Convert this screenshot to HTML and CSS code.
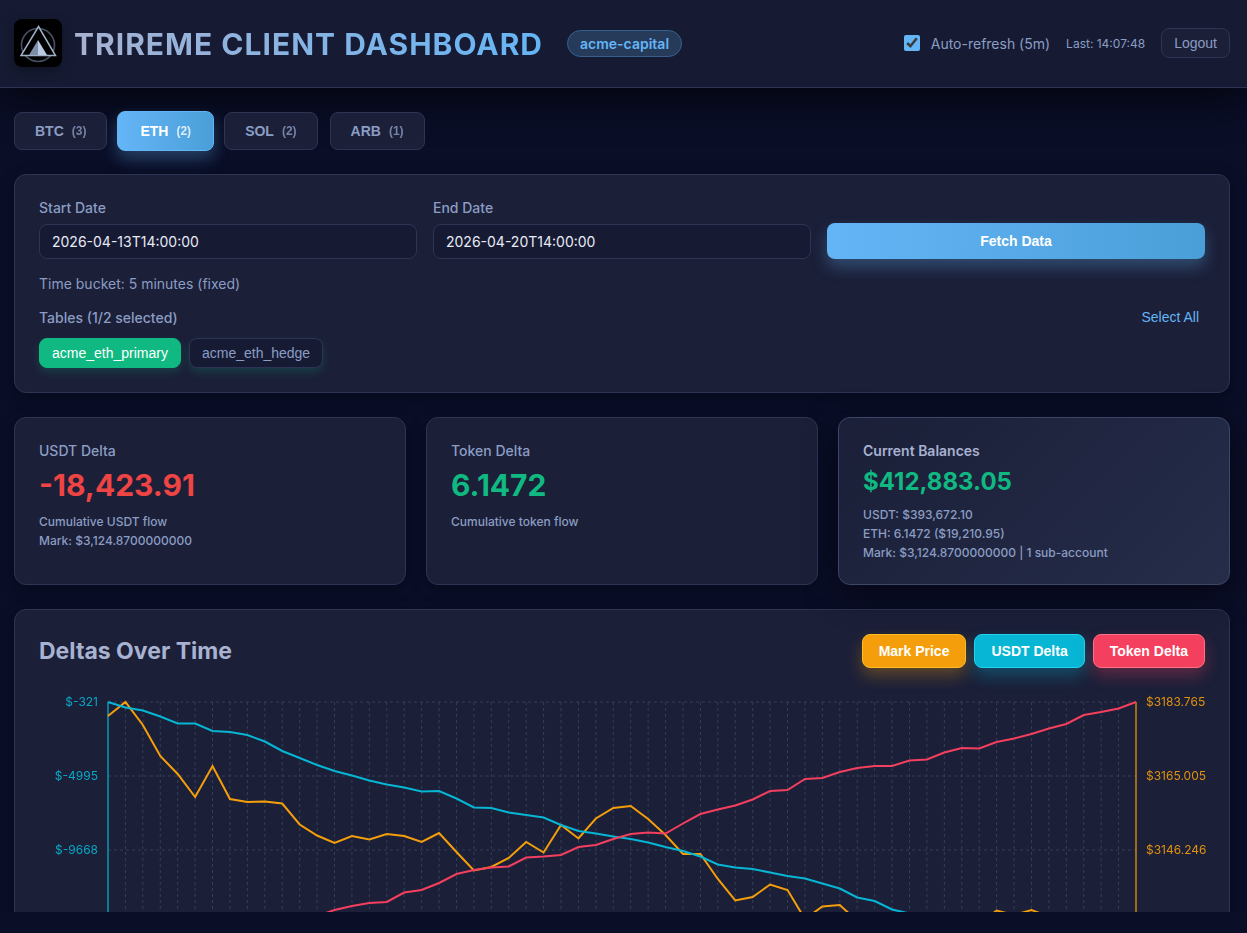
FILE: index.html
```html
<!DOCTYPE html>
<html lang="en">
<head>
    <meta charset="UTF-8">
    <meta name="viewport" content="width=device-width, initial-scale=1">
    <title>Trireme Client Dashboard</title>
    <link rel="stylesheet" href="styles.css">
</head>
<body>
    <header class="header">
        <div class="brand">
            <svg class="logo" viewBox="0 0 48 48" aria-hidden="true">
                <rect width="48" height="48" fill="#000"/>
                <circle cx="24" cy="26" r="16.5" fill="none" stroke="#465062" stroke-width="1.6"/>
                <path d="M24.500 7.500L41.500 36.500H7z" fill="#000" stroke="#9fb0c4" stroke-width="1.5"/>
                <path d="M24 21L15 36h9z" fill="#7d8ea6"/>
                <path d="M24 21L33 36h-9z" fill="#b9cbe2"/>
            </svg>
            <h1 class="title">TRIREME CLIENT DASHBOARD</h1>
            <span class="badge">acme-capital</span>
        </div>
        <div class="tools">
            <label class="auto"><input type="checkbox" checked> Auto-refresh (5m)</label>
            <span class="last">Last: 14:07:48</span>
            <button class="logout" type="button">Logout</button>
        </div>
    </header>

    <main class="main">
        <nav class="tabs">
            <button class="tab" type="button">BTC <span class="count">(3)</span></button>
            <button class="tab active" type="button">ETH <span class="count">(2)</span></button>
            <button class="tab" type="button">SOL <span class="count">(2)</span></button>
            <button class="tab" type="button">ARB <span class="count">(1)</span></button>
        </nav>

        <section class="panel">
            <form class="filters">
                <div class="field">
                    <label for="start">Start Date</label>
                    <input id="start" type="text" value="2026-04-13T14:00:00">
                </div>
                <div class="field">
                    <label for="end">End Date</label>
                    <input id="end" type="text" value="2026-04-20T14:00:00">
                </div>
                <button class="fetch" type="button">Fetch Data</button>
            </form>
            <p class="bucket">Time bucket: 5 minutes (fixed)</p>
            <div class="tables_head">
                <span>Tables (1/2 selected)</span>
                <button class="select_all" type="button">Select All</button>
            </div>
            <div class="chips">
                <button class="chip active" type="button">acme_eth_primary</button>
                <button class="chip" type="button">acme_eth_hedge</button>
            </div>
        </section>

        <section class="cards">
            <div class="panel">
                <h3 class="card_label">USDT Delta</h3>
                <div class="value down">-18,423.91</div>
                <div class="notes">
                    <span>Cumulative USDT flow</span>
                    <span>Mark: $3,124.8700000000</span>
                </div>
            </div>
            <div class="panel">
                <h3 class="card_label">Token Delta</h3>
                <div class="value up">6.1472</div>
                <div class="notes">
                    <span>Cumulative token flow</span>
                </div>
            </div>
            <div class="panel balances">
                <h3 class="card_label">Current Balances</h3>
                <div class="value up">$412,883.05</div>
                <div class="notes">
                    <span>USDT: $393,672.10</span>
                    <span>ETH: 6.1472 ($19,210.95)</span>
                    <span>Mark: $3,124.8700000000 | 1 sub-account</span>
                </div>
            </div>
        </section>

        <section class="panel">
            <div class="chart_head">
                <h2>Deltas Over Time</h2>
                <div class="toggles">
                    <button class="toggle mark" type="button">Mark Price</button>
                    <button class="toggle usdt" type="button">USDT Delta</button>
                    <button class="toggle token" type="button">Token Delta</button>
                </div>
            </div>
            <svg class="chart" viewBox="0 0 1166 400" role="img" aria-label="Deltas over time"></svg>
        </section>
    </main>
    <script src="chart.js"></script>
</body>
</html>
```

FILE: styles.css
```css
* {
    box-sizing: border-box;
}

body,
h1,
h2,
h3,
p {
    margin: 0;
}

body {
    display: flex;
    flex-direction: column;
    height: 100vh;
    padding-bottom: 21px;
    background: #0a0e27;
    color: #8b9dc3;
    font: 14px/17px Inter, "Noto Sans", sans-serif;
}

button {
    font: 14px/16px "Liberation Sans", Arial, sans-serif;
    border-radius: 8px;
    cursor: pointer;
}

/* header */

.header {
    display: flex;
    align-items: center;
    justify-content: space-between;
    padding: 19px 17px 20px 14px;
    background: #161b33;
    border-bottom: 1px solid #2d3454;
    box-shadow: 0 10px 40px rgba(0, 0, 0, 0.7);
    position: relative;
}

.brand,
.tools,
.auto {
    display: flex;
    align-items: center;
}

.logo {
    width: 48px;
    height: 48px;
    border-radius: 8px;
    box-shadow: 0 4px 12px rgba(0, 0, 0, 0.3);
}

.title {
    margin: 0 24px 0 12px;
    padding-top: 2px;
    font-size: 30px;
    line-height: 36px;
    font-weight: 700;
    letter-spacing: 1px;
    background: linear-gradient(90deg, #a8b2d1, #64b5f6);
    -webkit-background-clip: text;
    background-clip: text;
    color: transparent;
}

.badge {
    padding: 4px 12px;
    border: 1px solid #36618d;
    border-radius: 14px;
    background: #263a5a;
    color: #64b5f6;
    font-weight: 600;
}

.tools {
    gap: 16px;
}

.auto {
    gap: 11px;
}

.auto input {
    width: 16px;
    height: 16px;
    margin: 0;
    accent-color: #64b5f6;
}

.last {
    font-size: 12px;
}

.logout {
    padding: 6px 12px;
    border: 1px solid #2d3454;
    background: #1b1f38;
    color: #8b9dc3;
}

/* content */

.main {
    flex: 1;
    min-height: 0;
    overflow: hidden;
    display: flex;
    flex-direction: column;
    gap: 24px;
    padding: 24px 17px 0 14px;
}

/* keeps the tabs above the shadow of the header */
.tabs {
    display: flex;
    align-items: center;
    gap: 12px;
    height: 38px;
    position: relative;
    z-index: 1;
}

.tab {
    display: flex;
    align-items: center;
    gap: 8px;
    padding: 10px 20px;
    border: 1px solid #2d3454;
    background: #1b1f38;
    color: #8b9dc3;
    font-weight: 700;
}

.count {
    font-size: 12px;
    opacity: 0.8;
}

.tab.active {
    margin: 0 -2px;
    padding: 11px 22px;
    border-color: #64b5f6;
    background: linear-gradient(90deg, #64b5f6, #4a9fd8);
    color: #fff;
    box-shadow: 0 8px 16px rgba(100, 181, 246, 0.3);
}

.panel {
    flex-shrink: 0;
    padding: 24px;
    border: 1px solid #2d3454;
    border-radius: 12px;
    background: #1b1f38;
    box-shadow: 0 4px 16px rgba(0, 0, 0, 0.3);
}

.filters {
    display: grid;
    grid-template-columns: repeat(3, 1fr);
    align-items: end;
    gap: 16px;
}

.field label {
    display: block;
    margin-bottom: 8px;
    font-weight: 500;
}

.field input {
    display: block;
    width: 100%;
    padding: 8px 12px;
    border: 1px solid #2d3454;
    border-radius: 8px;
    background: #161b33;
    color: #e8eaf6;
    font: 14px/17px Inter, sans-serif;
}

.fetch {
    padding: 10px 16px;
    border: 0;
    background: linear-gradient(90deg, #64b5f6, #4a9fd8);
    color: #fff;
    font-weight: 700;
    box-shadow: 0 8px 16px rgba(100, 181, 246, 0.3);
}

.bucket {
    margin: 16px 0 15px;
}

.tables_head {
    display: flex;
    align-items: center;
    justify-content: space-between;
    margin-bottom: 11px;
    font-weight: 500;
}

.select_all {
    padding: 2px 6px;
    border: 0;
    background: none;
    color: #64b5f6;
}

.chips,
.toggles {
    display: flex;
    gap: 8px;
}

.chip {
    padding: 6px 12px;
    border: 1px solid #2d3454;
    background: #161b33;
    color: #8b9dc3;
    box-shadow: 0 4px 8px rgba(16, 185, 129, 0.2);
}

.chip.active {
    border-color: #10b981;
    background: #10b981;
    color: #fff;
}

/* summary cards */

.cards {
    flex-shrink: 0;
    display: grid;
    grid-template-columns: repeat(3, 1fr);
    gap: 20px;
}

.card_label {
    margin-bottom: 8px;
    font-size: 14px;
    font-weight: 500;
}

.value {
    margin-bottom: 11px;
    font-size: 30px;
    line-height: 36px;
    font-weight: 700;
}

.up {
    color: #10b981;
}

.down {
    color: #ef4444;
}

.notes {
    display: flex;
    flex-direction: column;
    gap: 4px;
    font-size: 12px;
    line-height: 15px;
    font-weight: 500;
}

.balances {
    position: relative;
    border-color: #3d4666;
    background: linear-gradient(135deg, #1b1f38, #252d49);
    box-shadow: 0 8px 32px rgba(0, 0, 0, 0.5);
}

.balances .card_label {
    color: #a8b2d1;
    font-weight: 600;
}

.balances .value {
    font-size: 24px;
    line-height: 29px;
}

/* chart */

.chart_head {
    display: flex;
    align-items: center;
    justify-content: space-between;
    margin-bottom: 24px;
}

.chart_head h2 {
    color: #a8b2d1;
    font-size: 23px;
    line-height: 34px;
    font-weight: 700;
}

.toggle {
    padding: 8px 16px;
    border: 1px solid;
    color: #fff;
    font-weight: 700;
}

.toggle.mark {
    background: #f59e0b;
    border-color: #fbbf24;
    box-shadow: 0 8px 16px rgba(245, 158, 11, 0.3);
}

.toggle.usdt {
    background: #06b6d4;
    border-color: #22d3ee;
    box-shadow: 0 8px 16px rgba(6, 182, 212, 0.3);
}

.toggle.token {
    background: #f43f5e;
    border-color: #fb7185;
    box-shadow: 0 8px 16px rgba(244, 63, 94, 0.3);
}

.chart {
    display: block;
    width: 100%;
    overflow: visible;
}

.grid {
    stroke: #324056;
    stroke-dasharray: 3 3;
}

.axis {
    stroke-width: 2;
    opacity: 0.6;
}

.tick {
    font-size: 12px;
    opacity: 0.9;
}

.line {
    fill: none;
    stroke-width: 2;
}
```

FILE: chart.js
```js
(function () {
    var chart = document.querySelector('.chart');
    var left = 69, right = 1097, top = 10, bottom = 380;
    var step = (right - left) / 59;

    // distance of each point from the top of the plot
    var series = [
        {
            color: '#f59e0b',
            points: [14, 0, 23, 54, 72, 95, 64, 97, 100, 99.5, 101.5, 122.5, 133.5, 141, 134, 137.5, 132, 134, 140, 131,
                150, 168.5, 165, 156, 140, 150.5, 123, 136.5, 116.5, 106, 104, 117, 133, 152, 152, 177, 198.5, 195, 182.5, 188,
                217, 204.5, 203, 219, 230, 238, 242, 235, 228, 231, 222, 208.5, 213, 208, 214.5, 226, 238, 250, 262, 270]
        },
        {
            color: '#06b6d4',
            points: [0, 5.5, 8.5, 14.5, 21.5, 21.5, 29, 30, 33, 39.5, 49, 56, 63, 69, 73.5, 78.5, 82.5, 85.5, 89.5, 89,
                96.5, 105.5, 106, 110.5, 113, 115.5, 123, 129, 131.5, 134.5, 137, 140.5, 145, 149, 154.5, 162.5, 165.5, 167, 170.5, 174,
                176.5, 181.5, 186.5, 195.5, 199, 207.5, 211.5, 218, 226, 233, 240, 246, 254, 260, 267, 273, 280, 286, 291, 296]
        },
        {
            color: '#f43f5e',
            points: [296, 289, 283, 276, 270, 262, 255, 248, 241, 235, 228, 221, 214, 208, 204, 201, 200, 190.5, 188, 181,
                172, 168, 165.5, 164.5, 155.5, 154.5, 153, 145, 143, 137, 132, 130.5, 131.5, 121.5, 112, 107.5, 103.5, 97.5, 89, 88,
                77, 76, 70, 66, 64, 64, 58.5, 57.5, 50.5, 46, 46.5, 40, 36.5, 32, 26.5, 22, 13, 10, 6.5, 0]
        }
    ];
    var leftTicks = ['$-321', '$-4995', '$-9668'];
    var rightTicks = ['$3183.765', '$3165.005', '$3146.246'];
    var str = '';

    leftTicks.forEach(function (text, i) {
        var y = top + 74 * i;
        str += `<line class="grid" x1="${left}" y1="${y}" x2="${right}" y2="${y}"/>
                <text class="tick" x="${left - 10}" y="${y + 4}" text-anchor="end" fill="#06b6d4">${text}</text>
                <text class="tick" x="${right + 10}" y="${y + 4}" fill="#f59e0b">${rightTicks[i]}</text>`;
    });
    for (var i = 1; i < 59; i++) {
        var x = left + step * i;
        str += `<line class="grid" x1="${x}" y1="${top}" x2="${x}" y2="${bottom}"/>`;
    }
    str += `<line class="axis" x1="${left}" y1="${top}" x2="${left}" y2="${bottom}" stroke="#06b6d4"/>
            <line class="axis" x1="${right}" y1="${top}" x2="${right}" y2="${bottom}" stroke="#f59e0b"/>`;
    series.forEach(function (item) {
        var points = item.points.map(function (y, i) {
            return (left + step * i) + ',' + (top + y);
        });
        str += `<polyline class="line" stroke="${item.color}" points="${points.join(' ')}"/>`;
    });

    chart.innerHTML = str;
})();
```
